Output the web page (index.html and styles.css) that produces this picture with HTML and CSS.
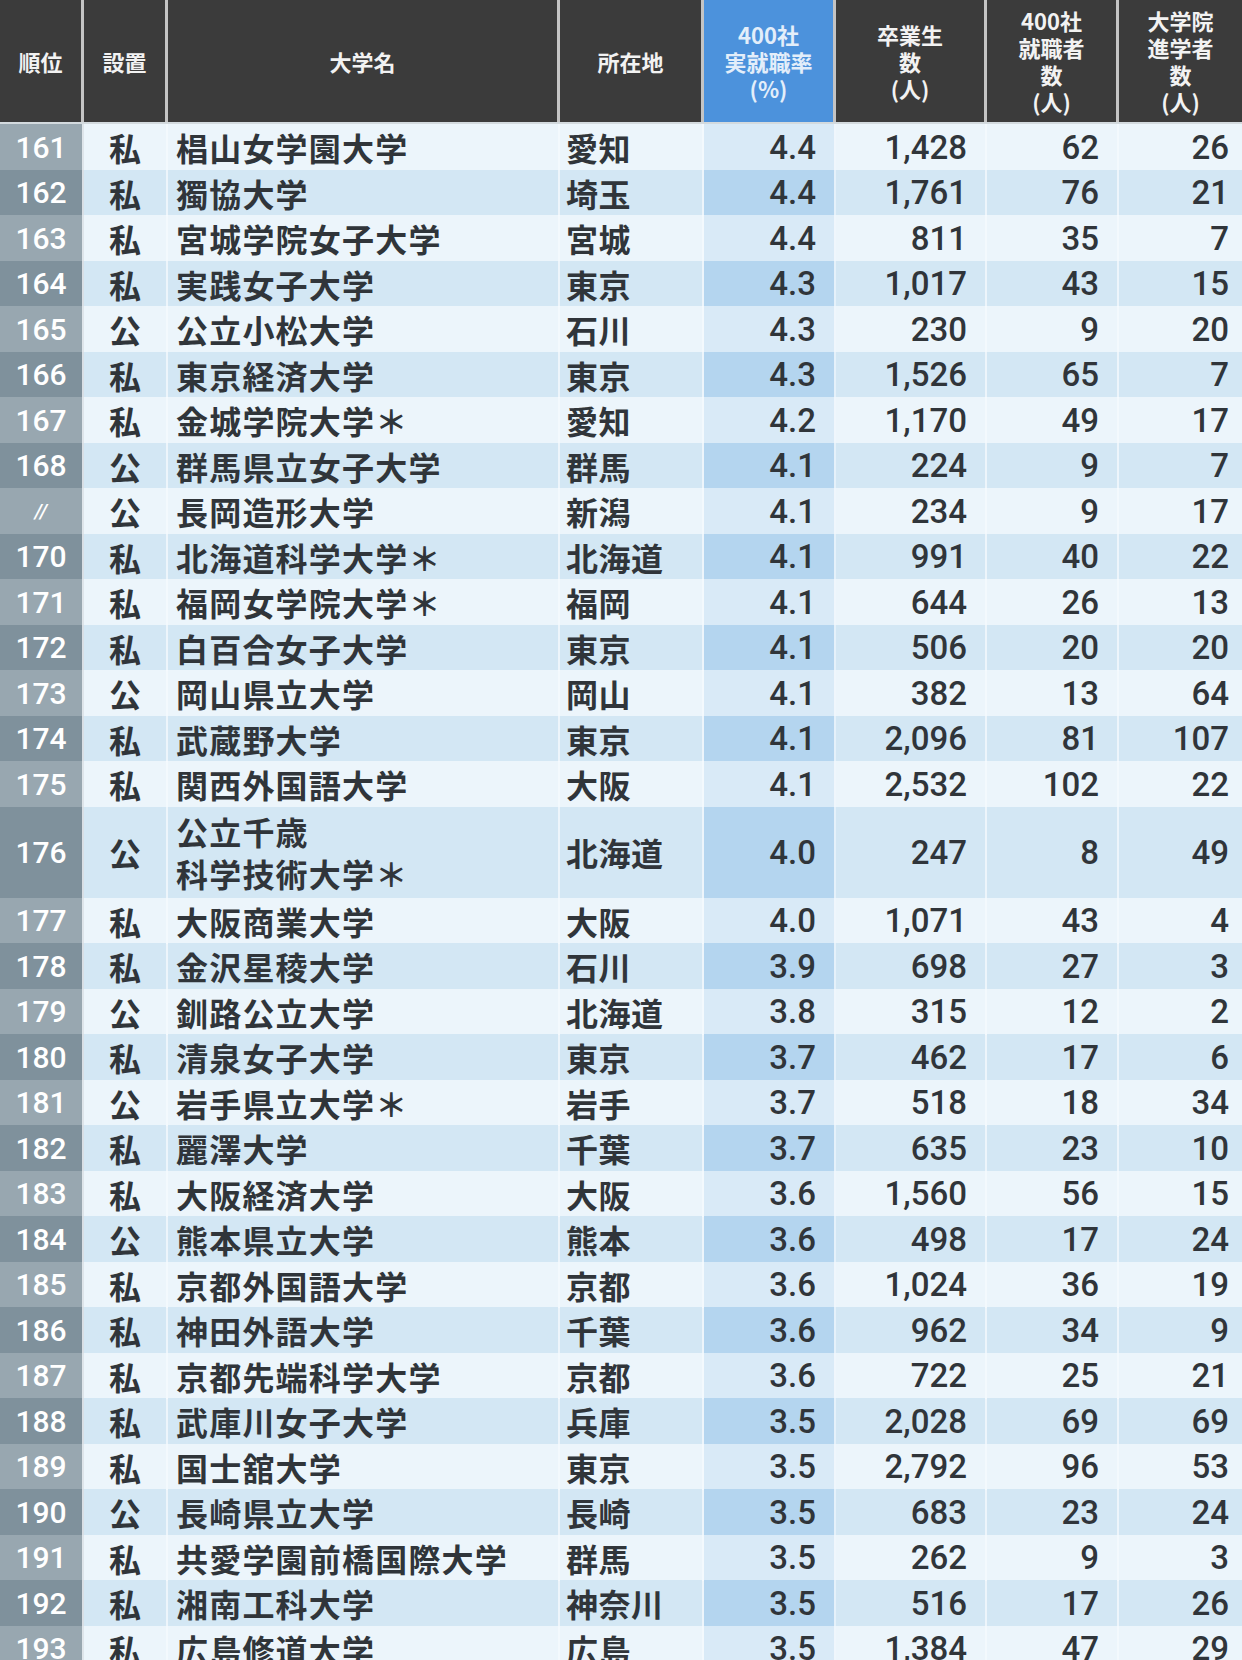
FILE: index.html
```html
<!DOCTYPE html>
<html lang="ja">
<head>
<meta charset="utf-8">
<title>400社実就職率ランキング 161〜193位</title>
<link rel="stylesheet" href="styles.css">
</head>
<body>
<div class="table">
  <div class="thead">
    <div class="th">順位</div>
    <div class="th">設置</div>
    <div class="th">大学名</div>
    <div class="th">所在地</div>
    <div class="th hl">400社<br>実就職率<br>(%)</div>
    <div class="th">卒業生<br>数<br>(人)</div>
    <div class="th">400社<br>就職者<br>数<br>(人)</div>
    <div class="th">大学院<br>進学者<br>数<br>(人)</div>
  </div>
  <div class="tbody">
    <div class="tr"><div class="rank">161</div><div class="type">私</div><div class="name">椙山女学園大学</div><div class="loc">愛知</div><div class="num rate">4.4</div><div class="num">1,428</div><div class="num">62</div><div class="num last">26</div></div>
    <div class="tr"><div class="rank">162</div><div class="type">私</div><div class="name">獨協大学</div><div class="loc">埼玉</div><div class="num rate">4.4</div><div class="num">1,761</div><div class="num">76</div><div class="num last">21</div></div>
    <div class="tr"><div class="rank">163</div><div class="type">私</div><div class="name">宮城学院女子大学</div><div class="loc">宮城</div><div class="num rate">4.4</div><div class="num">811</div><div class="num">35</div><div class="num last">7</div></div>
    <div class="tr"><div class="rank">164</div><div class="type">私</div><div class="name">実践女子大学</div><div class="loc">東京</div><div class="num rate">4.3</div><div class="num">1,017</div><div class="num">43</div><div class="num last">15</div></div>
    <div class="tr"><div class="rank">165</div><div class="type">公</div><div class="name">公立小松大学</div><div class="loc">石川</div><div class="num rate">4.3</div><div class="num">230</div><div class="num">9</div><div class="num last">20</div></div>
    <div class="tr"><div class="rank">166</div><div class="type">私</div><div class="name">東京経済大学</div><div class="loc">東京</div><div class="num rate">4.3</div><div class="num">1,526</div><div class="num">65</div><div class="num last">7</div></div>
    <div class="tr"><div class="rank">167</div><div class="type">私</div><div class="name">金城学院大学＊</div><div class="loc">愛知</div><div class="num rate">4.2</div><div class="num">1,170</div><div class="num">49</div><div class="num last">17</div></div>
    <div class="tr"><div class="rank">168</div><div class="type">公</div><div class="name">群馬県立女子大学</div><div class="loc">群馬</div><div class="num rate">4.1</div><div class="num">224</div><div class="num">9</div><div class="num last">7</div></div>
    <div class="tr"><div class="rank ditto">//</div><div class="type">公</div><div class="name">長岡造形大学</div><div class="loc">新潟</div><div class="num rate">4.1</div><div class="num">234</div><div class="num">9</div><div class="num last">17</div></div>
    <div class="tr"><div class="rank">170</div><div class="type">私</div><div class="name">北海道科学大学＊</div><div class="loc">北海道</div><div class="num rate">4.1</div><div class="num">991</div><div class="num">40</div><div class="num last">22</div></div>
    <div class="tr"><div class="rank">171</div><div class="type">私</div><div class="name">福岡女学院大学＊</div><div class="loc">福岡</div><div class="num rate">4.1</div><div class="num">644</div><div class="num">26</div><div class="num last">13</div></div>
    <div class="tr"><div class="rank">172</div><div class="type">私</div><div class="name">白百合女子大学</div><div class="loc">東京</div><div class="num rate">4.1</div><div class="num">506</div><div class="num">20</div><div class="num last">20</div></div>
    <div class="tr"><div class="rank">173</div><div class="type">公</div><div class="name">岡山県立大学</div><div class="loc">岡山</div><div class="num rate">4.1</div><div class="num">382</div><div class="num">13</div><div class="num last">64</div></div>
    <div class="tr"><div class="rank">174</div><div class="type">私</div><div class="name">武蔵野大学</div><div class="loc">東京</div><div class="num rate">4.1</div><div class="num">2,096</div><div class="num">81</div><div class="num last">107</div></div>
    <div class="tr"><div class="rank">175</div><div class="type">私</div><div class="name">関西外国語大学</div><div class="loc">大阪</div><div class="num rate">4.1</div><div class="num">2,532</div><div class="num">102</div><div class="num last">22</div></div>
    <div class="tr tall"><div class="rank">176</div><div class="type">公</div><div class="name">公立千歳<br>科学技術大学＊</div><div class="loc">北海道</div><div class="num rate">4.0</div><div class="num">247</div><div class="num">8</div><div class="num last">49</div></div>
    <div class="tr"><div class="rank">177</div><div class="type">私</div><div class="name">大阪商業大学</div><div class="loc">大阪</div><div class="num rate">4.0</div><div class="num">1,071</div><div class="num">43</div><div class="num last">4</div></div>
    <div class="tr"><div class="rank">178</div><div class="type">私</div><div class="name">金沢星稜大学</div><div class="loc">石川</div><div class="num rate">3.9</div><div class="num">698</div><div class="num">27</div><div class="num last">3</div></div>
    <div class="tr"><div class="rank">179</div><div class="type">公</div><div class="name">釧路公立大学</div><div class="loc">北海道</div><div class="num rate">3.8</div><div class="num">315</div><div class="num">12</div><div class="num last">2</div></div>
    <div class="tr"><div class="rank">180</div><div class="type">私</div><div class="name">清泉女子大学</div><div class="loc">東京</div><div class="num rate">3.7</div><div class="num">462</div><div class="num">17</div><div class="num last">6</div></div>
    <div class="tr"><div class="rank">181</div><div class="type">公</div><div class="name">岩手県立大学＊</div><div class="loc">岩手</div><div class="num rate">3.7</div><div class="num">518</div><div class="num">18</div><div class="num last">34</div></div>
    <div class="tr"><div class="rank">182</div><div class="type">私</div><div class="name">麗澤大学</div><div class="loc">千葉</div><div class="num rate">3.7</div><div class="num">635</div><div class="num">23</div><div class="num last">10</div></div>
    <div class="tr"><div class="rank">183</div><div class="type">私</div><div class="name">大阪経済大学</div><div class="loc">大阪</div><div class="num rate">3.6</div><div class="num">1,560</div><div class="num">56</div><div class="num last">15</div></div>
    <div class="tr"><div class="rank">184</div><div class="type">公</div><div class="name">熊本県立大学</div><div class="loc">熊本</div><div class="num rate">3.6</div><div class="num">498</div><div class="num">17</div><div class="num last">24</div></div>
    <div class="tr"><div class="rank">185</div><div class="type">私</div><div class="name">京都外国語大学</div><div class="loc">京都</div><div class="num rate">3.6</div><div class="num">1,024</div><div class="num">36</div><div class="num last">19</div></div>
    <div class="tr"><div class="rank">186</div><div class="type">私</div><div class="name">神田外語大学</div><div class="loc">千葉</div><div class="num rate">3.6</div><div class="num">962</div><div class="num">34</div><div class="num last">9</div></div>
    <div class="tr"><div class="rank">187</div><div class="type">私</div><div class="name">京都先端科学大学</div><div class="loc">京都</div><div class="num rate">3.6</div><div class="num">722</div><div class="num">25</div><div class="num last">21</div></div>
    <div class="tr"><div class="rank">188</div><div class="type">私</div><div class="name">武庫川女子大学</div><div class="loc">兵庫</div><div class="num rate">3.5</div><div class="num">2,028</div><div class="num">69</div><div class="num last">69</div></div>
    <div class="tr"><div class="rank">189</div><div class="type">私</div><div class="name">国士舘大学</div><div class="loc">東京</div><div class="num rate">3.5</div><div class="num">2,792</div><div class="num">96</div><div class="num last">53</div></div>
    <div class="tr"><div class="rank">190</div><div class="type">公</div><div class="name">長崎県立大学</div><div class="loc">長崎</div><div class="num rate">3.5</div><div class="num">683</div><div class="num">23</div><div class="num last">24</div></div>
    <div class="tr"><div class="rank">191</div><div class="type">私</div><div class="name">共愛学園前橋国際大学</div><div class="loc">群馬</div><div class="num rate">3.5</div><div class="num">262</div><div class="num">9</div><div class="num last">3</div></div>
    <div class="tr"><div class="rank">192</div><div class="type">私</div><div class="name">湘南工科大学</div><div class="loc">神奈川</div><div class="num rate">3.5</div><div class="num">516</div><div class="num">17</div><div class="num last">26</div></div>
    <div class="tr"><div class="rank">193</div><div class="type">私</div><div class="name">広島修道大学</div><div class="loc">広島</div><div class="num rate">3.5</div><div class="num">1,384</div><div class="num">47</div><div class="num last">29</div></div>
  </div>
</div>
</body>
</html>
```

FILE: styles.css
```css
html, body {
  margin: 0;
  padding: 0;
  background: #ebf5fb;
}

body {
  width: 1242px;
  height: 1660px;
  overflow: hidden;
  font-family: "Noto Sans CJK JP", "Noto Sans", sans-serif;
  color: #30353a;
}

.table {
  width: 1242px;
}

.thead,
.tr {
  display: grid;
  grid-template-columns: 84px 84px 392px 144px 132px 151px 132px 123px;
}

.thead {
  height: 124px;
  background: #3b3b3b;
  border-bottom: 2px solid #d3dade;
  box-sizing: border-box;
}

.th {
  display: flex;
  align-items: center;
  justify-content: center;
  text-align: center;
  color: #f2f2f2;
  font-weight: 700;
  font-size: 22px;
  line-height: 27px;
  border-right: 3px solid #c4c4c4;
}

.th:last-child {
  border-right: none;
}

.th.hl {
  background: #4c92dc;
  color: #e3eefa;
}

.tr {
  height: 45.5px;
  background: #ecf5fb;
}

.tr:nth-child(even) {
  background: #d3e7f4;
}

.tr.tall {
  height: 91px;
}

.tr > div {
  display: flex;
  align-items: center;
  border-right: 2px solid rgba(245, 250, 253, 0.75);
}

.tr > div:last-child {
  border-right: none;
}

.rank {
  justify-content: center;
  background: #98a7b0;
  color: #ffffff;
  font-family: Roboto, "Noto Sans", sans-serif;
  font-weight: 500;
  font-size: 30px;
}

.tr:nth-child(even) .rank {
  background: #7f919c;
}

.rank.ditto {
  font-size: 20px;
  font-style: italic;
  letter-spacing: 0;
}

.type {
  justify-content: center;
  font-size: 32px;
  font-weight: 700;
}

.name {
  padding-left: 8px;
  font-size: 32px;
  font-weight: 700;
  letter-spacing: 1.2px;
  line-height: 42px;
}

.loc {
  padding-left: 6px;
  font-size: 32px;
  font-weight: 700;
  letter-spacing: 0.5px;
}

.num {
  justify-content: flex-end;
  padding-right: 18px;
  font-family: Roboto, "Noto Sans", sans-serif;
  font-weight: 500;
  font-size: 33px;
}

.num.last {
  padding-right: 13px;
}

.rate {
  background: #d9eaf7;
}

.tr:nth-child(even) .rate {
  background: #b4d5ef;
}
```
